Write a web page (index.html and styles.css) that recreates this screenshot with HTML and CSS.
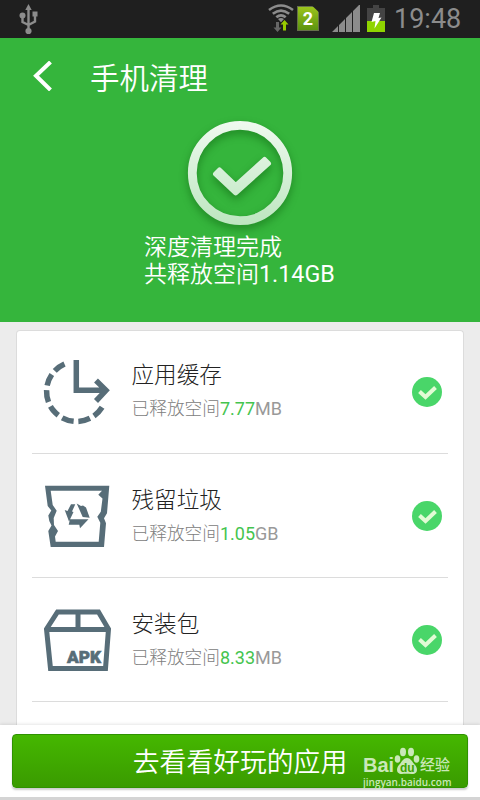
FILE: index.html
```html
<!DOCTYPE html>
<html lang="zh-CN">
<head>
    <meta charset="UTF-8">
    <meta name="viewport" content="width=device-width, initial-scale=1.0">
    <title>手机清理</title>
    <link rel="stylesheet" href="styles.css">
</head>
<body>
    <!-- Status bar -->
    <div class="statusbar">
        <svg class="usb" viewBox="0 0 20 32" fill="#8c8c8c">
            <path d="M9.500 1l3.200 6h-6.400z"/>
            <circle cx="9.500" cy="28" r="3.100"/>
            <circle cx="3.500" cy="12.500" r="3"/>
            <path d="M13.500 8.500h5v5h-5z"/>
            <path d="M9.500 6v20M3.500 13v6l6 3M16 13v5.500l-6.500 3.500" fill="none" stroke="#8c8c8c" stroke-width="2.400"/>
        </svg>
        <svg class="wifi" viewBox="0 0 26 28" fill="none">
            <path d="M1 6q12-9 24 0M4.800 9.800q8.200-6.500 16.400 0M8.300 13.300q4.700-4 9.400 0" stroke="#8c8c8c" stroke-width="2.600"/>
            <path d="M10 15q3-2 6 0l-3 3.200z" fill="#8c8c8c"/>
            <path d="M8 18h3v5.500h2.500l-4 4.500-4-4.500h2.500z" fill="#666"/>
            <path d="M15 26.500h3v-6h2.500l-4-4.500-4 4.500h2.500z" fill="#99cc00"/>
        </svg>
        <div class="sim">2</div>
        <svg class="signal" viewBox="0 0 28 27" fill="#8c8c8c">
            <path d="M0 27l6-6v6zM7 20l6-6v13H7zM14 13l6-6v20h-6zM21 6l6-6h1v27h-7z"/>
        </svg>
        <svg class="battery" viewBox="0 0 18 27">
            <path d="M6 0h6v3h6v13h-18v-13h6z" fill="#444"/>
            <path d="M0 16h18v11h-18z" fill="#8fd400"/>
            <path d="M7 8h6l-1.500 5 3-.500-7 11 1-7.500-4 1z" fill="#fff"/>
        </svg>
        <span class="time">19:48</span>
    </div>

    <!-- Header -->
    <div class="header">
        <div class="title">
            <svg class="back" viewBox="0 0 20 30">
                <path d="M18.500 1L4 14.800 18.500 29" fill="none" stroke="#fff" stroke-width="4"/>
            </svg>
            <h1>手机清理</h1>
        </div>
        <svg class="done" viewBox="0 0 120 120">
            <defs>
                <linearGradient id="shade" gradientUnits="userSpaceOnUse" x1="60" y1="8" x2="60" y2="112">
                    <stop offset="0" stop-color="#eff9ef"/>
                    <stop offset="1" stop-color="#bce6bf"/>
                </linearGradient>
            </defs>
            <g fill="url(#shade)" stroke="url(#shade)">
                <circle cx="60" cy="59" r="47.700" fill="none" stroke-width="8.800"/>
                <path d="M35.500 60l4-4 16.200 15.500L84.500 45.500l4 4L55.700 79z" stroke-width="5" stroke-linejoin="round"/>
            </g>
        </svg>
        <div class="result">
            <p>深度清理完成</p>
            <p>共释放空间<span>1.14GB</span></p>
        </div>
    </div>

    <!-- Cleaned items -->
    <div class="content">
        <div class="card">
            <div class="item">
                <svg class="icon" viewBox="0 0 72 72" fill="none" stroke="#576d78" stroke-width="5.500">
                    <path d="M62.100 51.200A30 30 0 1 1 24.500 8" pathLength="215" stroke-dasharray="23 9"/>
                    <path d="M36.300 4v30.300H66M56 24.500l10 9.800-10 10.700"/>
                </svg>
                <div class="text">
                    <h2>应用缓存</h2>
                    <p>已释放空间<span class="num">7.77</span><span class="unit">MB</span></p>
                </div>
                <svg class="check" viewBox="0 0 30 30">
                    <circle cx="15" cy="15" r="15" fill="#49d669"/>
                    <path d="M7.500 14.500l6 5.500 10-9.500" fill="none" stroke="#e2fbd5" stroke-width="4"/>
                </svg>
            </div>
            <div class="item">
                <svg class="icon" viewBox="0 0 72 72" fill="#576d78">
                    <path fill-rule="evenodd" d="M5 5.700H69.300L67 33.300 64 38.300 66 43.300 64 67H10.700L8.300 51 11.500 45.500 9.300 41 8.300 35.500 11.300 30.500 7.700 26zM10.700 10.700L12.700 25 16.700 30.700 13.700 38 14 45 18 51 15 56.500 15.700 61.700H58.700L60.300 42.700 57.300 36.700 60.800 31.700 62.500 18.500 58.300 14.800 62 10.700z"/>
                    <path d="M24.700 30l2.800 1 3.500-6.700h4.300L32 31.500l1.500.500-4.500 9.500zM36.700 23.500L41 26l2-.500 3 2 3.700 10.200-7-.700zM30 39.300h18.500l-8.500 9-.700-3.500-10.600-.100z"/>
                </svg>
                <div class="text">
                    <h2>残留垃圾</h2>
                    <p>已释放空间<span class="num">1.05</span><span class="unit">GB</span></p>
                </div>
                <svg class="check" viewBox="0 0 30 30">
                    <circle cx="15" cy="15" r="15" fill="#49d669"/>
                    <path d="M7.500 14.500l6 5.500 10-9.500" fill="none" stroke="#e2fbd5" stroke-width="4"/>
                </svg>
            </div>
            <div class="item">
                <svg class="icon" viewBox="0 0 72 72" fill="none" stroke="#576d78" stroke-width="5">
                    <path d="M17.500 8h41l10 17-3 39.500H10.500L6.500 25zM6.500 25.500h62M38 8v17"/>
                    <text x="27" y="59" textLength="34" lengthAdjust="spacingAndGlyphs" class="apk">APK</text>
                </svg>
                <div class="text">
                    <h2>安装包</h2>
                    <p>已释放空间<span class="num">8.33</span><span class="unit">MB</span></p>
                </div>
                <svg class="check" viewBox="0 0 30 30">
                    <circle cx="15" cy="15" r="15" fill="#49d669"/>
                    <path d="M7.500 14.500l6 5.500 10-9.500" fill="none" stroke="#e2fbd5" stroke-width="4"/>
                </svg>
            </div>
        </div>
    </div>

    <!-- Bottom button -->
    <div class="footer">
        <button class="more">去看看好玩的应用</button>
        <div class="watermark">
            <div class="brand">
                <span class="bai">Bai</span>
                <svg class="paw" viewBox="0 0 26 28" fill="#c9e8b8">
                    <ellipse cx="3.500" cy="12" rx="2.800" ry="3.800"/>
                    <ellipse cx="9" cy="5" rx="3" ry="4.200"/>
                    <ellipse cx="17" cy="5" rx="3" ry="4.200"/>
                    <ellipse cx="22.500" cy="12" rx="2.800" ry="3.800"/>
                    <path d="M13 11c4 0 5 4 8 7s3 9-3 9c-3 0-7-.500-10 0-6 0-6-6-3-9s4-7 8-7z"/>
                    <text x="6" y="25" class="du">du</text>
                </svg>
                <span class="cn">经验</span>
            </div>
            <div class="url">jingyan.baidu.com</div>
        </div>
    </div>
</body>
</html>
```
FILE: styles.css
```css
* {
    box-sizing: border-box;
}

body {
    margin: 0;
    height: 800px;
    display: flex;
    flex-direction: column;
    overflow: hidden;
    background-color: #ececec;
    font-family: Roboto, "Noto Sans CJK SC", sans-serif;
    font-weight: 300;
}

h1, h2, p {
    margin: 0;
    font-weight: 300;
}

svg {
    display: block;
    flex: none;
}

/* Status bar */
.statusbar {
    height: 38px;
    flex: none;
    display: flex;
    align-items: flex-start;
    background-color: #1f1f1f;
    color: #8c8c8c;
}

.usb {
    width: 20px;
    height: 32px;
    margin: 3px auto 0 19px;
}

.wifi {
    width: 26px;
    height: 28px;
    margin: 4px 3px 0 0;
}

.sim {
    width: 22px;
    height: 25px;
    margin: 6px 13px 0 0;
    border: 1px solid #66704a;
    background: linear-gradient(#9bc41c, #5c9410);
    clip-path: polygon(0 0, 70% 0, 100% 25%, 100% 100%, 0 100%);
    color: #fff;
    font: bold 18px/24px Roboto, sans-serif;
    text-align: center;
}

.signal {
    width: 28px;
    height: 27px;
    margin: 5px 7px 0 0;
}

.battery {
    width: 18px;
    height: 27px;
    margin: 5px 9px 0 0;
}

.time {
    width: 86px;
    font-size: 27px;
    font-weight: 400;
    line-height: 38px;
}

/* Header */
.header {
    height: 284px;
    flex: none;
    display: flex;
    flex-direction: column;
    background-color: #35b53c;
    color: #fff;
}

.title {
    height: 76px;
    display: flex;
    align-items: center;
}

.back {
    width: 20px;
    height: 30px;
    margin: 0 38px 0 32px;
}

.title h1 {
    padding-top: 5px;
    font-size: 29.5px;
    line-height: 40px;
    font-weight: 350;
}

.done {
    width: 120px;
    height: 120px;
    margin: 0 auto;
    filter: drop-shadow(0 4px 4px rgba(0, 70, 0, 0.4));
}

.result {
    margin-left: 144px;
    font-size: 23px;
    line-height: 27px;
}

.result span {
    font-size: 23.3px;
    font-weight: 400;
}

.result p {
    font-weight: 350;
}

/* Card */
.content {
    flex: 1;
    min-height: 0;
    display: flex;
    padding: 8px 16px 0;
}

.card {
    flex: 1;
    padding: 0 15px;
    background-color: #fff;
    border: 1px solid #dcdcdc;
    border-bottom: none;
    border-radius: 4px 4px 0 0;
}

.item {
    height: 124px;
    display: flex;
    align-items: center;
    padding: 1px 6px 0 8px;
    border-bottom: 1px solid #dcdcdc;
}

.item:first-child {
    height: 123px;
    padding: 0 6px 1px 8px;
}

.icon {
    width: 72px;
    height: 72px;
    margin-right: 19.5px;
}

.apk {
    fill: #576d78;
    stroke: #576d78;
    stroke-width: 0.6px;
    font: 900 16px Roboto, sans-serif;
}

.text {
    flex: 1;
}

.text h2 {
    padding-top: 1px;
    color: #222;
    font-size: 22.6px;
    line-height: 34px;
}

.text p {
    color: #808080;
    font-size: 17.7px;
    line-height: 31px;
}

.text .num {
    color: #44c44e;
    font-size: 18px;
    font-weight: 400;
}

.text .unit {
    color: #999;
    font-size: 18px;
    font-weight: 400;
}

.check {
    width: 30px;
    height: 30px;
}

/* Footer */
.footer {
    position: relative;
    height: 75px;
    flex: none;
    padding: 9px 12px;
    background-color: #fff;
    border-bottom: 3px solid #d4d4d4;
    box-shadow: 0 -1px 3px rgba(0, 0, 0, 0.1);
}

.more {
    display: block;
    width: 100%;
    height: 54px;
    padding: 4px 0 0;
    border: 1px solid #2f9200;
    border-radius: 4px;
    background: linear-gradient(#45b700, #3a9b00);
    box-shadow: 0 2px 2px rgba(0, 0, 0, 0.2);
    color: #fff;
    font: 350 26.8px/48px Roboto, "Noto Sans CJK SC", sans-serif;
}

/* Logo drawn over the button */
.watermark {
    position: absolute;
    left: 363px;
    top: 22px;
    color: #c9e8b8;
}

.brand {
    height: 28px;
    display: flex;
    align-items: flex-end;
}

.bai {
    width: 31px;
    font: 600 20px/20px "Liberation Sans", sans-serif;
}

.paw {
    width: 26px;
    height: 28px;
}

.du {
    fill: #3ea300;
    font: bold 12px "Liberation Sans", sans-serif;
}

.cn {
    font: 500 15px/22px "Noto Sans CJK SC", sans-serif;
}

.url {
    font: 600 10px/14px "Open Sans", sans-serif;
}
```
